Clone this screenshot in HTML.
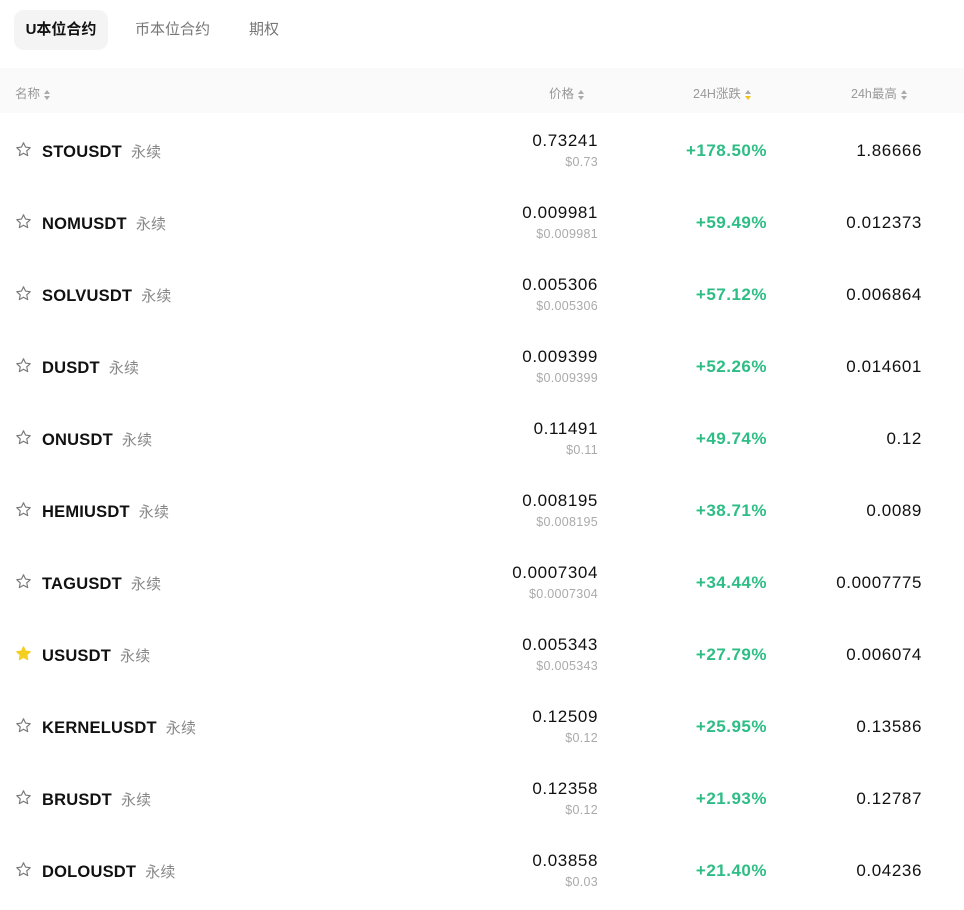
<!DOCTYPE html>
<html><head><meta charset="utf-8"><style>
*{margin:0;padding:0;box-sizing:border-box}
body{width:964px;height:910px;background:#fff;font-family:"Liberation Sans","Noto Sans CJK SC",sans-serif;position:relative;overflow:hidden;color:#111}
.tab{position:absolute;top:10px;height:40px;line-height:40px;font-size:15px;color:#777}
.tab.a{left:14px;width:94px;background:#f4f4f4;border-radius:10px;color:#111;text-align:center;font-weight:bold}
.hdr{position:absolute;top:68px;left:0;width:964px;height:45px;background:#fafafa;font-size:12.5px;color:#999}
.hdr span{position:absolute;top:15px}
.sort{display:inline-block;vertical-align:middle;margin-left:4px;width:6px;height:10px;position:relative}
.sort:before,.sort:after{content:"";position:absolute;left:0;border-left:3px solid transparent;border-right:3px solid transparent}
.sort:before{top:0;border-bottom:4px solid #aaa}
.sort:after{bottom:0;border-top:4px solid #aaa}
.sort.y:after{border-top-color:#f0c419}
.row{position:absolute;left:0;width:964px;height:0}
.star{position:absolute;left:15px;top:-10px}
.nm{position:absolute;left:42px;top:-10px;font-size:16.5px;font-weight:bold;color:#111;letter-spacing:0.2px}
.nm i{font-style:normal;font-weight:normal;color:#888;font-size:15px;margin-left:9px}
.p{position:absolute;right:366px;top:-20px;font-size:17px;letter-spacing:0.6px;text-align:right}
.s{position:absolute;right:366px;top:4px;font-size:12.5px;letter-spacing:0.3px;color:#aaa;text-align:right}
.c{position:absolute;right:197px;top:-10px;font-size:17px;letter-spacing:0.5px;font-weight:bold;color:#2dbd85}
.h{position:absolute;right:42px;top:-10px;font-size:17px;letter-spacing:0.6px}
</style></head><body>
<div class="tab a">U本位合约</div>
<div class="tab" style="left:135px">币本位合约</div>
<div class="tab" style="left:249px">期权</div>
<div class="hdr">
<span style="left:15px">名称<i class="sort"></i></span>
<span style="left:549px">价格<i class="sort"></i></span>
<span style="left:693px">24H涨跌<i class="sort y"></i></span>
<span style="left:851px">24h最高<i class="sort"></i></span>
</div>
<div id="rows"></div>
<script>
var d=[["STOUSDT","0.73241","$0.73","+178.50%","1.86666"],
["NOMUSDT","0.009981","$0.009981","+59.49%","0.012373"],
["SOLVUSDT","0.005306","$0.005306","+57.12%","0.006864"],
["DUSDT","0.009399","$0.009399","+52.26%","0.014601"],
["ONUSDT","0.11491","$0.11","+49.74%","0.12"],
["HEMIUSDT","0.008195","$0.008195","+38.71%","0.0089"],
["TAGUSDT","0.0007304","$0.0007304","+34.44%","0.0007775"],
["USUSDT","0.005343","$0.005343","+27.79%","0.006074"],
["KERNELUSDT","0.12509","$0.12","+25.95%","0.13586"],
["BRUSDT","0.12358","$0.12","+21.93%","0.12787"],
["DOLOUSDT","0.03858","$0.03","+21.40%","0.04236"]];
var h="";
d.forEach(function(r,i){
var y=151+72*i;var fav=i==7;
var st='<svg class="star" width="17" height="17" viewBox="0 0 24 24"><path d="M12 2.5l2.9 6.1 6.6.8-4.9 4.6 1.3 6.6L12 17.3l-5.9 3.3 1.3-6.6-4.9-4.6 6.6-.8z" fill="'+(fav?'#f5cf1f':'none')+'" stroke="'+(fav?'#f5cf1f':'#777')+'" stroke-width="1.6" stroke-linejoin="round"/></svg>';
h+='<div class="row" style="top:'+y+'px">'+st+'<div class="nm">'+r[0]+'<i>永续</i></div><div class="p">'+r[1]+'</div><div class="s">'+r[2]+'</div><div class="c">'+r[3]+'</div><div class="h">'+r[4]+'</div></div>';
});
document.getElementById("rows").innerHTML=h;
</script>
</body></html>
